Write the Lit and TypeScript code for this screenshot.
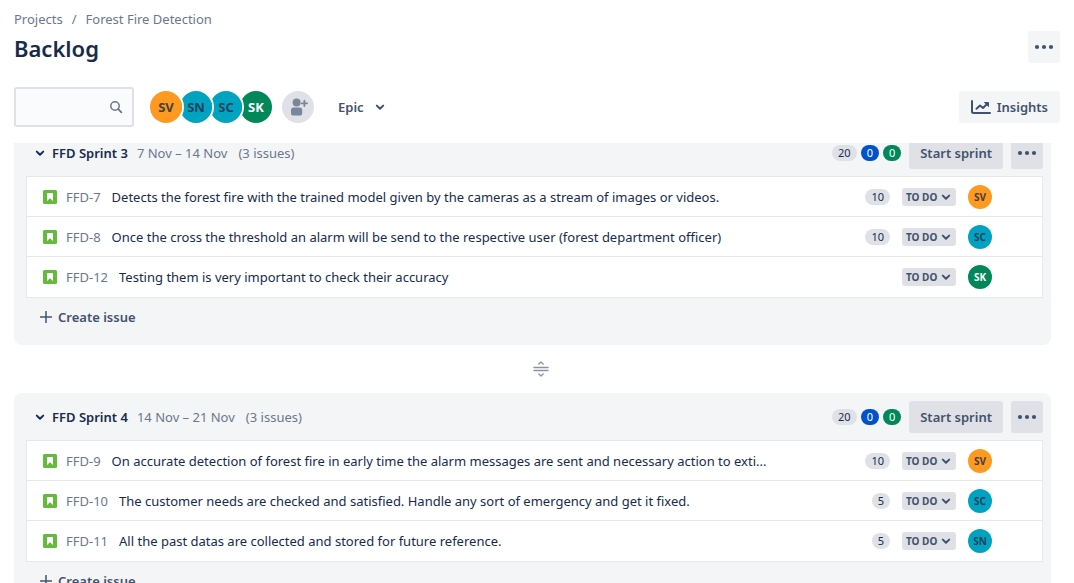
import { LitElement, html, css, svg, nothing } from "lit";
import { customElement, property, query } from "lit/decorators.js";
import { classMap } from "lit/directives/class-map.js";

interface Issue {
  key: string;
  summary: string;
  points?: number;
  assignee: string;
}

interface Sprint {
  name: string;
  dates: string;
  todo: number;
  inProgress: number;
  done: number;
  issues: Issue[];
}

const SPRINTS: Sprint[] = [
  {
    name: "FFD Sprint 3",
    dates: "7 Nov – 14 Nov",
    todo: 20,
    inProgress: 0,
    done: 0,
    issues: [
      {
        key: "FFD-7",
        summary: "Detects the forest fire with the trained model given by the cameras as a stream of images or videos.",
        points: 10,
        assignee: "SV",
      },
      {
        key: "FFD-8",
        summary: "Once the cross the threshold an alarm will be send to the respective user (forest department officer)",
        points: 10,
        assignee: "SC",
      },
      { key: "FFD-12", summary: "Testing them is very important to check their accuracy", assignee: "SK" },
    ],
  },
  {
    name: "FFD Sprint 4",
    dates: "14 Nov – 21 Nov",
    todo: 20,
    inProgress: 0,
    done: 0,
    issues: [
      {
        key: "FFD-9",
        summary: "On accurate detection of forest fire in early time the alarm messages are sent and necessary action to exti...",
        points: 10,
        assignee: "SV",
      },
      {
        key: "FFD-10",
        summary: "The customer needs are checked and satisfied. Handle any sort of emergency and get it fixed.",
        points: 5,
        assignee: "SC",
      },
      {
        key: "FFD-11",
        summary: "All the past datas are collected and stored for future reference.",
        points: 5,
        assignee: "SN",
      },
    ],
  },
];

const chevron = html`<svg class="chevron" width="10" height="10" viewBox="0 0 10 10" aria-hidden="true">
  <path d="M1.8 3.6 5 6.7l3.2-3.1" fill="none" stroke="currentColor" stroke-width="2" stroke-linecap="round" stroke-linejoin="round" />
</svg>`;

const dots = html`<svg width="20" height="8" viewBox="0 0 20 8" aria-hidden="true">
  ${[3, 10, 17].map((x) => svg`<circle cx=${x} cy="4" r="2.1" fill="currentColor" />`)}
</svg>`;

const base = css`
  * {
    box-sizing: border-box;
  }
  button,
  input,
  select {
    font: inherit;
    color: inherit;
    border: 0;
    margin: 0;
    padding: 0;
    background: none;
  }
  button {
    display: flex;
    align-items: center;
    justify-content: center;
    font-weight: 600;
    color: #42526e;
    cursor: pointer;
  }
  svg {
    display: block;
    flex: none;
  }
`;

@customElement("user-avatar")
export class UserAvatar extends LitElement {
  @property() initials = "";
  @property({ type: Boolean }) large = false;

  static styles = [
    base,
    css`
      :host {
        display: block;
        flex: none;
      }
      .avatar {
        display: grid;
        place-items: center;
        width: 24px;
        height: 24px;
        border-radius: 50%;
        background: #00a3bf;
        color: #24425f;
        font-size: 10px;
        line-height: 12px;
        font-weight: 700;
      }
      .large {
        width: 32px;
        height: 32px;
        font-size: 13px;
        line-height: 16px;
      }
      .sv {
        background: #ff991f;
        color: #42413f;
      }
      .sk {
        background: #00875a;
        color: #fff;
      }
    `,
  ];

  render() {
    const classes = { avatar: true, large: this.large, sv: this.initials === "SV", sk: this.initials === "SK" };
    return html`<span class=${classMap(classes)}>${this.initials}</span>`;
  }
}

@customElement("issue-row")
export class IssueRow extends LitElement {
  @property({ attribute: false }) issue!: Issue;

  static styles = [
    base,
    css`
      :host {
        box-sizing: border-box;
        display: flex;
        align-items: center;
        height: 40px;
        padding: 0 50px 0 16px;
      }
      .key {
        margin-left: 9px;
        color: #6b778c;
        text-decoration: none;
        white-space: nowrap;
      }
      .summary {
        flex: 1;
        min-width: 0;
        margin: 0 8px 0 11px;
        overflow: hidden;
        white-space: nowrap;
        text-overflow: ellipsis;
      }
      .points {
        min-width: 18px;
        padding: 0 6px;
        border-radius: 8px;
        background: #dfe1e6;
        font-size: 11px;
        line-height: 16px;
        text-align: center;
      }
      .status {
        display: grid;
        grid-template-columns: 1fr 10px;
        align-items: center;
        width: 54px;
        margin: 0 12px;
        padding-right: 5px;
        border-radius: 3px;
        background: #dfe1e6;
        color: #42526e;
      }
      .status select {
        grid-area: 1 / 1 / 2 / 3;
        appearance: none;
        height: 18px;
        padding-left: 4px;
        font-size: 10px;
        line-height: 18px;
        font-weight: 700;
      }
      .status svg {
        grid-area: 1 / 2;
        pointer-events: none;
      }
    `,
  ];

  render() {
    const { key, summary, points, assignee } = this.issue;
    return html`
      <svg width="14" height="14" viewBox="0 0 14 14" role="img" aria-label="Story">
        <rect width="14" height="14" rx="1.5" fill="#63ba3c" />
        <path d="M4 3.6c0-.4.2-.6.6-.6h4.800c.4 0 .6.200.6.600V11L7 8.200 4 11z" fill="#fff" />
      </svg>
      <a class="key" href="#${key}">${key}</a>
      <span class="summary">${summary}</span>
      ${points === undefined ? nothing : html`<span class="points">${points}</span>`}
      <label class="status">
        <select aria-label="Status of ${key}">
          <option>TO DO</option>
        </select>
        ${chevron}
      </label>
      <user-avatar initials=${assignee}></user-avatar>
    `;
  }
}

@customElement("sprint-card")
export class SprintCard extends LitElement {
  @property({ attribute: false }) sprint!: Sprint;

  static styles = [
    base,
    css`
      :host {
        display: block;
        padding: 8px 8px 12px 12px;
        border-radius: 8px;
        background: #f4f5f7;
      }
      header {
        display: flex;
        align-items: center;
        height: 32px;
        padding-left: 9px;
      }
      .toggle {
        width: 10px;
        height: 24px;
        color: #172b4d;
      }
      h2 {
        margin: 0 9px 0 7px;
        font-size: 13px;
        line-height: 20px;
        font-weight: 600;
      }
      .meta {
        margin-right: 11px;
        color: #6b778c;
        white-space: nowrap;
      }
      .counts {
        display: flex;
        gap: 4px;
        margin-left: auto;
      }
      .count {
        min-width: 18px;
        padding: 0 6px;
        border-radius: 8px;
        background: #dfe1e6;
        font-size: 11px;
        line-height: 16px;
        text-align: center;
      }
      .progress {
        background: #0052cc;
        color: #fff;
      }
      .done {
        background: #00875a;
        color: #fff;
      }
      .action {
        height: 32px;
        margin-left: 8px;
        padding: 0 11px;
        border-radius: 3px;
        background: #dfe1e6;
        white-space: nowrap;
      }
      .icon {
        width: 32px;
        padding: 0;
      }
      .issues {
        margin-top: 7px;
        border: 1px solid #e6e8ec;
        background: #fff;
      }
      .issues issue-row:not(:last-child) {
        border-bottom: 1px solid #e6e8ec;
      }
      .create {
        gap: 6px;
        height: 32px;
        margin: 3px 0 0 14px;
      }
    `,
  ];

  render() {
    const s = this.sprint;
    return html`
      <header>
        <button class="toggle" aria-label="Collapse ${s.name}" aria-expanded="true">${chevron}</button>
        <h2>${s.name}</h2>
        <span class="meta">${s.dates}</span>
        <span class="meta">(${s.issues.length} issues)</span>
        <div class="counts">
          <span class="count">${s.todo}</span>
          <span class="count progress">${s.inProgress}</span>
          <span class="count done">${s.done}</span>
        </div>
        <button class="action">Start sprint</button>
        <button class="action icon" aria-label="Sprint actions">${dots}</button>
      </header>
      <div class="issues">${s.issues.map((issue) => html`<issue-row .issue=${issue}></issue-row>`)}</div>
      <button class="create">
        <svg width="12" height="12" viewBox="0 0 12 12" aria-hidden="true">
          <path d="M6 .5v11M.5 6h11" stroke="currentColor" stroke-width="1.5" stroke-linecap="round" />
        </svg>
        Create issue
      </button>
    `;
  }
}

@customElement("app-root")
export class AppRoot extends LitElement {
  @query(".board") private board!: HTMLElement;

  static styles = [
    base,
    css`
      :host {
        display: flex;
        flex-direction: column;
        height: 100vh;
        background: #fff;
        color: #172b4d;
        font: 13px/20px "Noto Sans", sans-serif;
      }
      .top {
        padding: 9px 14px 16px;
      }
      .crumbs {
        display: flex;
        gap: 9px;
        color: #6b778c;
      }
      .crumbs a {
        color: inherit;
        text-decoration: none;
      }
      .heading {
        display: flex;
        align-items: center;
        justify-content: space-between;
        height: 32px;
        margin: 2px 0 24px;
      }
      h1 {
        margin: 0;
        padding-top: 2px;
        font-size: 22px;
        line-height: 28px;
        font-weight: 600;
      }
      .soft {
        gap: 6px;
        height: 32px;
        padding: 0 12px;
        border-radius: 3px;
        background: #f4f5f7;
      }
      .icon {
        width: 32px;
        padding: 0;
      }
      .filters {
        display: flex;
        align-items: center;
      }
      .search {
        display: flex;
        align-items: center;
        width: 120px;
        height: 40px;
        padding: 0 9px 0 6px;
        border: 2px solid #dfe1e6;
        border-radius: 3px;
        background: #fafbfc;
        color: #6b778c;
      }
      .search input {
        flex: 1;
        min-width: 0;
        outline: none;
      }
      .people {
        display: flex;
        margin: 0 8px 0 14px;
        isolation: isolate;
      }
      .people user-avatar {
        position: relative;
        border: 2px solid #fff;
        border-radius: 50%;
        margin-right: -6px;
      }
      .people user-avatar:nth-child(1) {
        z-index: 4;
      }
      .people user-avatar:nth-child(2) {
        z-index: 3;
      }
      .people user-avatar:nth-child(3) {
        z-index: 2;
      }
      .add {
        width: 32px;
        height: 32px;
        margin-left: 6px;
        border-radius: 50%;
        background: #dfe1e6;
      }
      .epic {
        gap: 11px;
        height: 32px;
        margin-left: 24px;
      }
      .insights {
        margin-left: auto;
      }
      .board {
        flex: 1;
        min-height: 0;
        padding: 0 6px 24px 14px;
        overflow-y: auto;
        scrollbar-width: none;
      }
      .board sprint-card {
        margin-right: 17px;
      }
      .divider {
        display: grid;
        place-items: center;
        height: 48px;
      }
    `,
  ];

  firstUpdated() {
    requestAnimationFrame(() => {
      this.board.scrollTop = 14;
    });
  }

  render() {
    return html`
      <div class="top">
        <nav class="crumbs" aria-label="Breadcrumbs">
          <a href="#projects">Projects</a><span>/</span><a href="#project">Forest Fire Detection</a>
        </nav>
        <div class="heading">
          <h1>Backlog</h1>
          <button class="soft icon" aria-label="Board actions">${dots}</button>
        </div>
        <div class="filters">
          <label class="search">
            <input type="text" aria-label="Search backlog" />
            <svg width="14" height="14" viewBox="0 0 14 14" aria-hidden="true">
              <circle cx="6" cy="6" r="4.2" fill="none" stroke="currentColor" stroke-width="1.5" />
              <path d="m9.2 9.2 3.2 3.2" stroke="currentColor" stroke-width="1.8" stroke-linecap="round" />
            </svg>
          </label>
          <div class="people">
            ${["SV", "SN", "SC", "SK"].map((i) => html`<user-avatar large initials=${i}></user-avatar>`)}
          </div>
          <button class="add" aria-label="Add people">
            <svg width="20" height="20" viewBox="0 0 20 20" fill="#7a869a" aria-hidden="true">
              <circle cx="8.6" cy="5.6" r="4" />
              <path d="M3 12.8c0-1.5 1-2.4 2.4-2.4h6.4c1.4 0 2.4.9 2.4 2.4v3.4c0 1.4-1 2.4-2.4 2.4H5.400C4 18.600 3 17.600 3 16.200z" />
              <path d="M16.4 3.6v5.4M13.7 6.3h5.4" stroke="#dfe1e6" stroke-width="3.6" />
              <path d="M16.4 3.6v5.4M13.7 6.3h5.4" stroke="#7a869a" stroke-width="1.8" stroke-linecap="round" />
            </svg>
          </button>
          <button class="epic" aria-haspopup="true">Epic ${chevron}</button>
          <button class="soft insights">
            <svg width="20" height="14" viewBox="0 0 20 14" fill="none" stroke="currentColor" stroke-width="2" stroke-linecap="round" stroke-linejoin="round" aria-hidden="true">
              <path d="M1 1v10.5c0 .8.5 1.5 1.5 1.5H19" />
              <path d="m5.500 8.800 3.500-3.300 3 2.500 4.500-4.500" />
              <path d="M13.800 2.500h3.700v3.700z" fill="currentColor" stroke-width="1" />
            </svg>
            Insights
          </button>
        </div>
      </div>
      <main class="board">
        <sprint-card .sprint=${SPRINTS[0]}></sprint-card>
        <div class="divider">
          <svg width="16" height="16" viewBox="0 0 16 16" fill="none" stroke="#8993a4" stroke-width="1.3" stroke-linecap="round" stroke-linejoin="round" aria-hidden="true">
            <path d="M1 6.500h14M1 9.500h14M5.800 3 8 1l2.200 2M5.800 13 8 15l2.200-2" />
          </svg>
        </div>
        <sprint-card .sprint=${SPRINTS[1]}></sprint-card>
      </main>
    `;
  }
}
